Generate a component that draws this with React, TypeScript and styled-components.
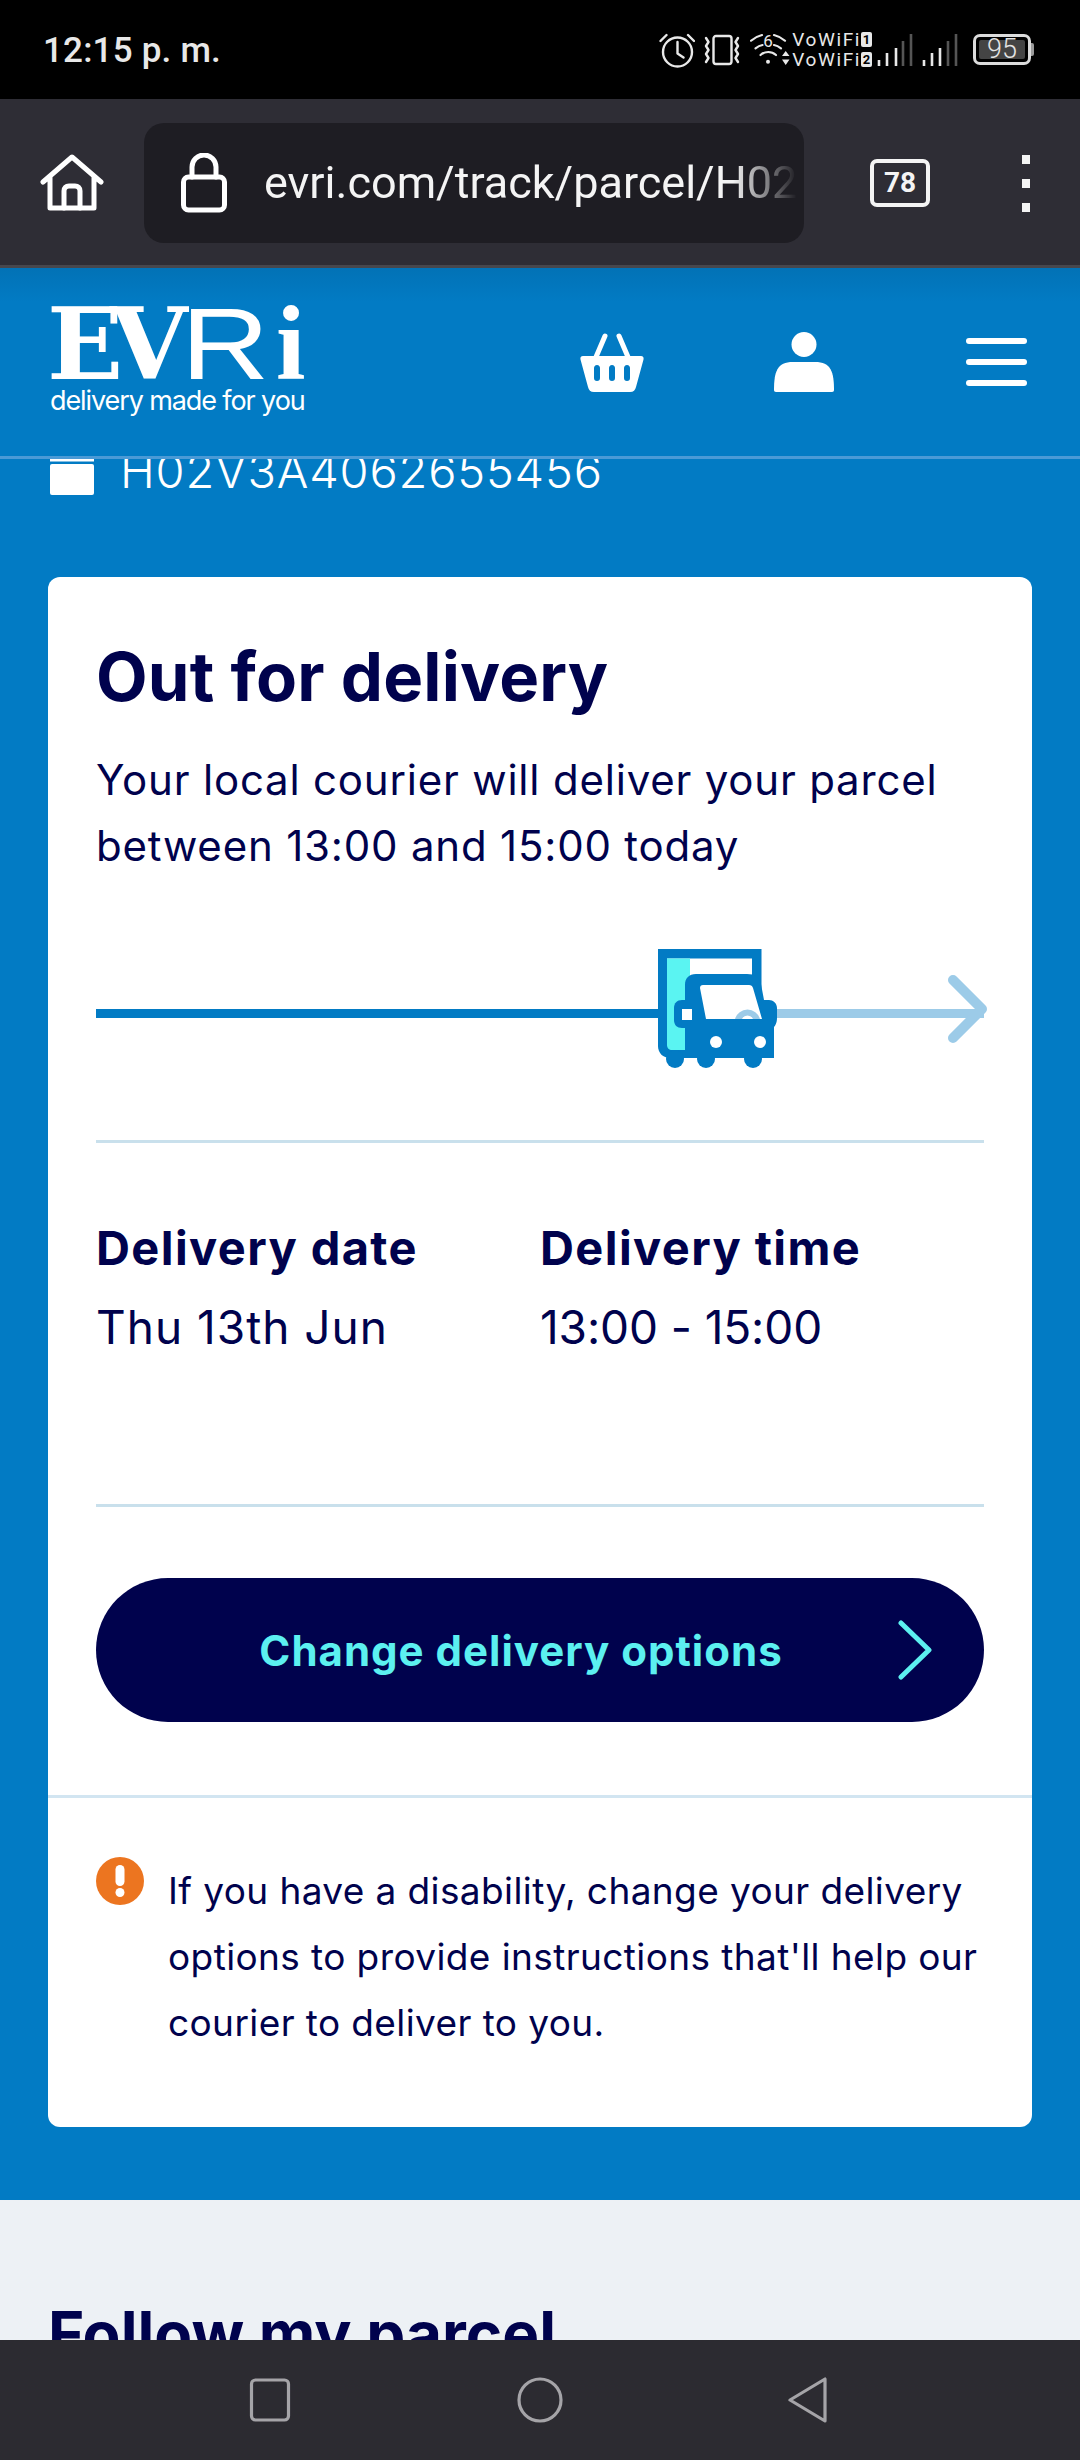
import { createGlobalStyle, styled } from "styled-components";

const GlobalStyle = createGlobalStyle`
  html, body {
    margin: 0;
    padding: 0;
    background: #000;
  }
  * {
    box-sizing: border-box;
  }
`;

const ink = "#00024d";
const blue = "#027bc4";
const bodyFont = `Inter, "Liberation Sans", sans-serif`;

const Phone = styled.div`
  width: 1080px;
  height: 2460px;
  display: flex;
  flex-direction: column;
  overflow: hidden;
  font-family: ${bodyFont};
`;

/* status bar */
const StatusBar = styled.div`
  height: 99px;
  flex: none;
  background: #000;
  display: flex;
  align-items: center;
  justify-content: space-between;
  padding: 0 49px 0 43px;
  color: #e8e8e8;
`;

const Clock = styled.span`
  font-family: Roboto, sans-serif;
  font-weight: 500;
  font-size: 35px;
  letter-spacing: 0.2px;
  padding-top: 2px;
`;

const StatusIcons = styled.div`
  display: flex;
  align-items: center;
  height: 40px;
`;

const VoWifi = styled.div`
  display: flex;
  flex-direction: column;
  gap: 5px;
  margin-left: 2px;
  font-family: Roboto, sans-serif;
  font-size: 19px;
  line-height: 15px;
  letter-spacing: 1.6px;
  color: #e8e8e8;
`;

const VoWifiRow = styled.div`
  display: flex;
  align-items: center;
  gap: 0;
`;

const SimBadge = styled.span`
  width: 11px;
  height: 15px;
  border-radius: 2px;
  background: #e8e8e8;
  color: #000;
  font-size: 13px;
  font-weight: 700;
  line-height: 15px;
  letter-spacing: 0;
  text-align: center;
`;

const Battery = styled.div`
  position: relative;
  width: 58px;
  height: 31px;
  margin-left: 12px;
  border: 3px solid #dcdcdc;
  border-radius: 7px;
  padding: 3px;
  &::after {
    content: "";
    position: absolute;
    right: -6px;
    top: 6px;
    width: 3px;
    height: 13px;
    background: #9a9a9a;
    border-radius: 0 2px 2px 0;
  }
`;

const BatteryLevel = styled.div`
  height: 100%;
  background: #444;
  border-radius: 2px;
  color: #e4e4e4;
  font-family: Roboto, sans-serif;
  font-size: 27px;
  font-weight: 300;
  line-height: 19px;
  text-align: center;
`;

/* browser toolbar */
const BrowserBar = styled.div`
  height: 169px;
  flex: none;
  background: #2e2d35;
  border-bottom: 3px solid #47474d;
  display: flex;
  align-items: center;
  padding: 2px 0 0 40px;
`;

const UrlBox = styled.div`
  width: 660px;
  height: 120px;
  margin-left: 40px;
  border-radius: 20px;
  background: #1e1d23;
  display: flex;
  align-items: center;
  padding: 0 7px 0 37px;
  gap: 37px;
`;

const UrlText = styled.div`
  flex: 1;
  min-width: 0;
  overflow: hidden;
  white-space: nowrap;
  color: #f4f4f4;
  font-family: Roboto, sans-serif;
  font-size: 45px;
  line-height: 60px;
  -webkit-mask-image: linear-gradient(to right, #000 88%, transparent 100%);
  mask-image: linear-gradient(to right, #000 88%, transparent 100%);
`;

const TabCount = styled.div`
  width: 60px;
  height: 48px;
  margin-left: 66px;
  border: 4px solid #f4f4f4;
  border-radius: 7px;
  color: #f4f4f4;
  font-family: Roboto, sans-serif;
  font-size: 28px;
  font-weight: 700;
  line-height: 40px;
  text-align: center;
`;

const MenuDots = styled.div`
  margin-left: 92px;
  display: flex;
  flex-direction: column;
  gap: 15px;
  span {
    width: 8px;
    height: 9px;
    background: #f4f4f4;
  }
`;

/* site header */
const SiteHeader = styled.header`
  height: 191px;
  flex: none;
  background: linear-gradient(#0272b6, ${blue} 34px);
  border-bottom: 3px solid #4a9ad6;
  display: flex;
  align-items: flex-start;
  padding: 34px 53px 0 50px;
  position: relative;
  z-index: 1;
`;

const Logo = styled.div`
  width: 256px;
  color: #fff;
`;

const LogoMark = styled.div`
  height: 84px;
  margin-left: -3px;
  display: flex;
  align-items: baseline;
  line-height: 84px;
  white-space: nowrap;
`;

/* the wordmark mixes a slab, a thin grotesque and a bold roman */
const LogoSlab = styled.span<{ $width: number }>`
  width: ${(p) => p.$width}px;
  font-family: "DejaVu Serif", serif;
  font-size: 100px;
  font-weight: 700;
  letter-spacing: -8px;
`;

const LogoThin = styled.span`
  width: 95px;
  font-family: "Liberation Sans", sans-serif;
  font-size: 102px;
  font-weight: 400;
  transform: scaleX(1.2);
  transform-origin: left;
`;

const LogoDot = styled.span`
  font-family: "Liberation Serif", serif;
  font-size: 106px;
  font-weight: 700;
`;

const LogoLine = styled.div`
  margin-top: 1px;
  font-family: ${bodyFont};
  font-size: 27px;
  line-height: 28px;
  letter-spacing: -1.1px;
  white-space: nowrap;
`;

const HeaderActions = styled.div`
  margin-left: auto;
  padding-top: 30px;
  display: flex;
  align-items: center;
  gap: 130px;
`;

const Hamburger = styled.div`
  width: 61px;
  height: 60px;
  margin-left: 2px;
  display: flex;
  flex-direction: column;
  gap: 15px;
  padding-top: 6px;
  span {
    height: 6px;
    border-radius: 3px;
    background: #fff;
  }
`;

/* scrolling page */
const PageScroll = styled.main`
  flex: 1;
  min-height: 0;
  overflow: hidden;
`;

const Hero = styled.section`
  background: ${blue};
  padding: 0 48px 73px;
`;

const ParcelRef = styled.div`
  height: 120px;
  margin-top: -2px;
  display: flex;
  align-items: flex-start;
  gap: 26px;
  padding-left: 2px;
  color: #fff;
`;

const ParcelIcon = styled.svg`
  flex: none;
  margin-top: 2px;
`;

const ParcelNumber = styled.div`
  font-size: 47px;
  font-weight: 300;
  line-height: 32px;
  margin-top: -2px;
  letter-spacing: 0.8px;
`;

const Card = styled.div`
  background: #fff;
  border-radius: 12px;
  color: ${ink};
`;

const CardMain = styled.div`
  padding: 60px 48px 73px;
`;

const Title = styled.h1`
  margin: 0;
  font-size: 67px;
  font-weight: 700;
  line-height: 80px;
  letter-spacing: 0.2px;
`;

const Lead = styled.p`
  margin: 30px 0 0;
  font-size: 42px;
  font-weight: 400;
  line-height: 65.5px;
  letter-spacing: 0.8px;
`;

const Track = styled.div`
  position: relative;
  margin-top: 131px;
  height: 9px;
  display: flex;
`;

const TrackDone = styled.div`
  width: 564px;
  background: ${blue};
`;

const TrackLeft = styled.div`
  flex: 1;
  background: #9ccbe8;
`;

const TruckMark = styled.svg`
  position: absolute;
  left: 562px;
  top: -60px;
`;

const ArrowHead = styled.svg`
  position: absolute;
  right: -3px;
  top: -35px;
`;

const Rule = styled.hr<{ $gap: number }>`
  margin: ${(p) => p.$gap}px 0 0;
  border: 0;
  height: 3px;
  background: #c9e0ec;
`;

const Facts = styled.div`
  margin-top: 77px;
  display: grid;
  grid-template-columns: 444px 1fr;
`;

const FactLabel = styled.div`
  font-size: 47px;
  font-weight: 700;
  line-height: 56px;
  letter-spacing: 1.4px;
`;

const FactValue = styled.div<{ $tracking: number }>`
  margin-top: 21px;
  font-size: 46px;
  line-height: 60px;
  letter-spacing: ${(p) => p.$tracking}px;
`;

const OptionsButton = styled.button`
  position: relative;
  display: block;
  width: 100%;
  height: 144px;
  margin-top: 71px;
  border: 0;
  border-radius: 72px;
  background: ${ink};
  color: #5cf0f0;
  font-family: ${bodyFont};
  font-size: 42px;
  font-weight: 700;
  letter-spacing: 1px;
  padding: 0 38px 0 0;
`;

const ButtonChevron = styled.svg`
  position: absolute;
  right: 52px;
  top: 42px;
`;

const Notice = styled.div`
  border-top: 3px solid #d2e5f1;
  padding: 60px 48px 71px;
  display: flex;
  align-items: flex-start;
  gap: 24px;
`;

const NoticeIcon = styled.svg`
  flex: none;
  margin-top: -1px;
`;

const NoticeText = styled.p`
  margin: 0;
  font-size: 37px;
  line-height: 66px;
  letter-spacing: 0.4px;
  white-space: nowrap;
`;

const FollowSection = styled.section`
  background: #edf1f5;
  padding: 99px 48px 0;
`;

const FollowTitle = styled.h2`
  margin: 0;
  font-size: 62px;
  font-weight: 700;
  line-height: 70px;
  color: ${ink};
`;

/* android navigation */
const NavBar = styled.nav`
  height: 120px;
  flex: none;
  background: #2c2b31;
  display: flex;
  align-items: center;
  justify-content: center;
  gap: 224px;
  position: relative;
`;

const strokeWhite = { fill: "none", stroke: "#fff", strokeLinecap: "round", strokeLinejoin: "round" } as const;

const App = () => (
  <Phone>
    <GlobalStyle />
    <StatusBar>
      <Clock>12:15 p. m.</Clock>
      <StatusIcons>
        {/* alarm */}
        <svg width="36" height="36" viewBox="0 0 36 36" fill="none" stroke="#e8e8e8" strokeWidth="2.4" strokeLinecap="round" strokeLinejoin="round">
          <circle cx="18.500" cy="20" r="14.500" />
          <path d="M18.500 10v11.500l6 4M1.500 9l6-6M35 9l-6-6" />
        </svg>
        {/* vibrate */}
        <svg width="36" height="32" viewBox="0 0 36 32" fill="none" stroke="#e8e8e8" strokeWidth="2.4" strokeLinecap="round" strokeLinejoin="round" style={{ marginLeft: 9 }}>
          <rect x="9.500" y="2" width="18" height="28" rx="2.500" />
          <path d="M2 4l2.500 4-2.500 4 2.500 4-2.500 4 2.500 4-2.500 4M34 4l-2.500 4 2.500 4-2.500 4 2.500 4-2.500 4 2.500 4" />
        </svg>
        {/* wifi 6 */}
        <svg width="40" height="36" viewBox="0 0 40 36" fill="none" stroke="#e8e8e8" strokeWidth="2.2" strokeLinecap="round" style={{ marginLeft: 10 }}>
          <path d="M1 8.700C4 6 8 4 12 3M35 8.700C32 6 28 4 24 3M5.500 16.300c2-1.500 4.500-2.800 7-3.300M31 16.300c-2-1.500-4.500-2.800-7-3.300M10.500 23c4.500-4 11-4 15.500 0" />
          <text x="18" y="15" textAnchor="middle" fontFamily="Roboto, sans-serif" fontSize="17" fill="#e8e8e8" stroke="none">6</text>
          <circle cx="18" cy="29.700" r="2" fill="#e8e8e8" stroke="none" />
          <path d="M32 24h7.500L35.700 19zM32 27.500h7.500L35.700 33z" fill="#e8e8e8" stroke="none" />
        </svg>
        <VoWifi>
          <VoWifiRow>VoWiFi<SimBadge>1</SimBadge></VoWifiRow>
          <VoWifiRow>VoWiFi<SimBadge>2</SimBadge></VoWifiRow>
        </VoWifi>
        {/* signal, two sims */}
        <svg width="84" height="34" viewBox="0 0 84 34" fill="none" strokeWidth="2.600" style={{ marginLeft: 5 }}>
          <path d="M2 33v-6M10 33v-13M19 33v-18" stroke="#e8e8e8" />
          <path d="M26 33v-25M34 33v-32" stroke="#555" />
          <path d="M47 33v-6M55 33v-13M63 33v-18" stroke="#e8e8e8" />
          <path d="M71 33v-25M79 33v-32" stroke="#555" />
        </svg>
        <Battery>
          <BatteryLevel>95</BatteryLevel>
        </Battery>
      </StatusIcons>
    </StatusBar>

    <BrowserBar>
      <svg width="64" height="58" viewBox="0 0 64 58">
        <path d="M3 28L32 3l29 25M10 23v31h44V23" {...strokeWhite} strokeWidth="5" />
        <path d="M24 54V37c0-3 2-5 5-5h6c3 0 5 2 5 5v17" {...strokeWhite} strokeWidth="5" />
      </svg>
      <UrlBox>
        <svg width="46" height="60" viewBox="0 0 46 60" style={{ flex: "none" }}>
          <rect x="2.500" y="24" width="41" height="33" rx="5" {...strokeWhite} strokeWidth="5" />
          <path d="M11 24V14a12 12 0 0 1 24 0v10" {...strokeWhite} strokeWidth="5" />
        </svg>
        <UrlText>evri.com/track/parcel/H02V3A4062655456</UrlText>
      </UrlBox>
      <TabCount>78</TabCount>
      <MenuDots>
        <span />
        <span />
        <span />
      </MenuDots>
    </BrowserBar>

    <SiteHeader>
      <Logo>
        <LogoMark>
          <LogoSlab $width={63}>E</LogoSlab>
          <LogoSlab $width={71}>V</LogoSlab>
          <LogoThin>R</LogoThin>
          <LogoDot>i</LogoDot>
        </LogoMark>
        <LogoLine>delivery made for you</LogoLine>
      </Logo>
      <HeaderActions>
        {/* basket */}
        <svg width="64" height="60" viewBox="0 0 64 60" fill="#fff">
          <path d="M16 25l9-21M48 25L39 4" stroke="#fff" strokeWidth="5" strokeLinecap="round" />
          <path fillRule="evenodd" d="M3 24h58c2 0 3 1.500 2.500 3.500L56 55c-.7 3-2.500 5-6 5H14c-3.500 0-5.300-2-6-5L.5 27.500C0 25.500 1 24 3 24zM17 33c-2 0-3 1.500-3 3v10c0 2 1 3 3 3s3-1 3-3V36c0-1.500-1-3-3-3zM32 33c-2 0-3 1.500-3 3v10c0 2 1 3 3 3s3-1 3-3V36c0-1.500-1-3-3-3zM47 33c-2 0-3 1.500-3 3v10c0 2 1 3 3 3s3-1 3-3V36c0-1.500-1-3-3-3z" />
        </svg>
        {/* account */}
        <svg width="60" height="60" viewBox="0 0 60 60" fill="#fff">
          <circle cx="30" cy="12.500" r="12.500" />
          <path d="M0 58c0-18 3-28 19-28h22c16 0 19 10 19 28 0 1-.7 2-2 2H2c-1.300 0-2-1-2-2z" />
        </svg>
        <Hamburger>
          <span />
          <span />
          <span />
        </Hamburger>
      </HeaderActions>
    </SiteHeader>

    <PageScroll>
      <Hero>
        <ParcelRef>
          <ParcelIcon width="44" height="36" viewBox="0 0 44 36" fill="#fff">
            <rect x="0" y="0" width="44" height="2.500" />
            <rect x="0" y="5" width="44" height="31" rx="2" />
          </ParcelIcon>
          <ParcelNumber>H02V3A4062655456</ParcelNumber>
        </ParcelRef>

        <Card>
          <CardMain>
            <Title>Out for delivery</Title>
            <Lead>
              Your local courier will deliver your parcel
              <br />
              between 13:00 and 15:00 today
            </Lead>

            <Track>
              <TrackDone />
              <TrackLeft />
              <TruckMark width="120" height="120" viewBox="0 0 120 120">
                {/* van body */}
                <path d="M0 0h103.500v109H12c-7 0-12-5-12-12z" fill={blue} />
                <rect x="9" y="9.500" width="85" height="40" fill="#fff" />
                <path d="M9 9.500h23V101H14c-3 0-5-2-5-5z" fill="#5af4f2" />
                {/* cab */}
                <circle cx="17" cy="110" r="9" fill={blue} />
                <circle cx="48" cy="110" r="9" fill={blue} />
                <circle cx="95" cy="110" r="9" fill={blue} />
                <path d="M27 51V36c0-7 4-11 11-11h51c8 0 12 3 14 10l3 16h5c4 0 8 3 8 8v10c0 5-2 8-3 9v31H27z" fill={blue} />
                <path d="M27 51H24c-5 0-8 3-8 8v12c0 5 3 8 8 8h3z" fill={blue} />
                <rect x="24" y="60" width="10" height="11" fill="#fff" />
                <path d="M42 39c0-2 1-3 3-3h46c2 0 3.500 1 4 3l9 31H48z" fill="#fff" />
                <path d="M77 70a13 13 0 0 1 25 0h-7a6 6 0 0 0-11 0z" fill="#9ccbe8" />
                <circle cx="58" cy="93" r="6" fill="#fff" />
                <circle cx="102" cy="93" r="6" fill="#fff" />
              </TruckMark>
              <ArrowHead width="40" height="70" viewBox="0 0 40 70" fill="none" stroke="#9ccbe8" strokeWidth="10" strokeLinecap="round" strokeLinejoin="round">
                <path d="M6 6l29 29L6 64" />
              </ArrowHead>
            </Track>

            <Rule $gap={122} />

            <Facts>
              <div>
                <FactLabel>Delivery date</FactLabel>
                <FactValue $tracking={1}>Thu 13th Jun</FactValue>
              </div>
              <div>
                <FactLabel>Delivery time</FactLabel>
                <FactValue $tracking={-0.1}>13:00 - 15:00</FactValue>
              </div>
            </Facts>

            <Rule $gap={147} />

            <OptionsButton>
              Change delivery options
              <ButtonChevron width="34" height="60" viewBox="0 0 34 60" fill="none" stroke="#5cf0f0" strokeWidth="5" strokeLinecap="round" strokeLinejoin="round">
                <path d="M3 3l28 27L3 57" />
              </ButtonChevron>
            </OptionsButton>
          </CardMain>

          <Notice>
            <NoticeIcon width="48" height="48" viewBox="0 0 48 48">
              <circle cx="24" cy="24" r="24" fill="#ec7520" />
              <rect x="19.500" y="8" width="9" height="21" rx="4.500" fill="#fff" />
              <circle cx="24" cy="35.500" r="4.500" fill="#fff" />
            </NoticeIcon>
            <NoticeText>
              If you have a disability, change your delivery
              <br />
              options to provide instructions that'll help our
              <br />
              courier to deliver to you.
            </NoticeText>
          </Notice>
        </Card>
      </Hero>

      <FollowSection>
        <FollowTitle>Follow my parcel</FollowTitle>
      </FollowSection>
    </PageScroll>

    <NavBar>
      <svg width="46" height="46" viewBox="0 0 46 46" fill="none" stroke="#a5a4a8" strokeWidth="3.200">
        <rect x="4.500" y="3" width="37" height="40" rx="4" />
      </svg>
      <svg width="46" height="46" viewBox="0 0 46 46" fill="none" stroke="#a5a4a8" strokeWidth="3.200">
        <circle cx="23" cy="23" r="21" />
      </svg>
      <svg width="46" height="46" viewBox="0 0 46 46" fill="none" stroke="#a5a4a8" strokeWidth="3.200" strokeLinejoin="round">
        <path d="M38 2v42L3 23z" />
      </svg>
    </NavBar>
  </Phone>
);

export default App;
